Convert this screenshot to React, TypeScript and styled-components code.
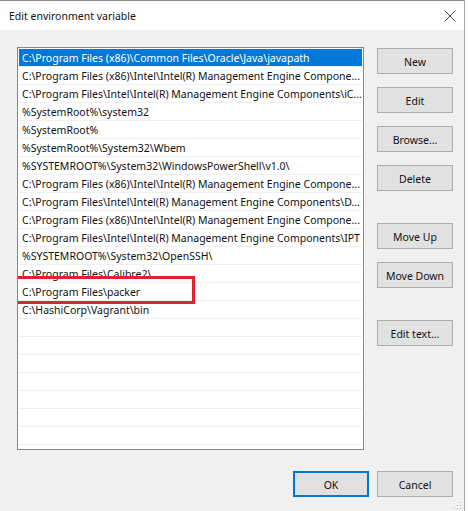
import React from 'react';
import styled, { createGlobalStyle } from 'styled-components';

const GlobalStyle = createGlobalStyle`
  html, body {
    margin: 0;
    padding: 0;
    background: #ffffff;
  }
  body {
    font-family: 'Noto Sans', 'Open Sans', sans-serif;
    font-size: 10.5px;
    color: #111;
  }
`;

const Window = styled.div`
  width: 465px;
  height: 511px;
  box-sizing: border-box;
  border-top: 1px solid #8c8c8c;
  border-right: 1px solid #a8a8a8;
  background: #f0f0f0;
  display: flex;
  flex-direction: column;
  position: relative;
`;

const TitleBar = styled.div`
  height: 30px;
  background: #ffffff;
  display: flex;
  align-items: center;
  justify-content: space-between;
  padding: 1px 8px 0 9px;
`;

const Title = styled.span`
  font-size: 10.5px;
  color: #111;
`;

const CloseButton = styled.div`
  width: 13px;
  height: 14px;
  display: flex;
  align-items: center;
  justify-content: flex-end;
`;

const Body = styled.div`
  flex: 1;
  display: flex;
  flex-direction: column;
  padding: 17px 11px 14px 17px;
`;

const Main = styled.div`
  display: flex;
  gap: 13px;
`;

const List = styled.div`
  width: 347px;
  height: 403px;
  box-sizing: border-box;
  border: 1px solid #828790;
  background: #ffffff;
  padding: 1px;
  overflow: hidden;
`;

const Row = styled.div<{ $selected?: boolean }>`
  position: relative;
  height: 18px;
  box-sizing: border-box;
  border-bottom: 1px solid #f0f0f0;
  padding: 1px 3px 0;
  display: flex;
  align-items: center;
  white-space: nowrap;
  background: ${(p) => (p.$selected ? '#0078d7' : 'transparent')};
  color: ${(p) => (p.$selected ? '#ffffff' : '#111111')};
  font-size: 10.5px;
`;

const Marker = styled.div`
  position: absolute;
  left: -15px;
  top: -7px;
  width: 191px;
  height: 28px;
  box-sizing: border-box;
  border: 3px solid #e0222c;
  pointer-events: none;
`;

const ButtonColumn = styled.div`
  display: flex;
  flex-direction: column;
  gap: 13px;
  padding-top: 1px;
`;

const Button = styled.button<{ $spaced?: boolean; $default?: boolean }>`
  width: 76px;
  height: 26px;
  box-sizing: border-box;
  background: #e1e1e1;
  border: 1px solid ${(p) => (p.$default ? '#0078d7' : '#adadad')};
  box-shadow: ${(p) => (p.$default ? 'inset 0 0 0 1px #0078d7' : 'none')};
  font-family: 'Noto Sans', 'Open Sans', sans-serif;
  font-size: 10.5px;
  color: #111;
  padding: 1px 0 0;
  margin-top: ${(p) => (p.$spaced ? '19px' : '0')};
`;

const Footer = styled.div`
  display: flex;
  justify-content: flex-end;
  gap: 8px;
  margin-top: 21px;
`;

const Grip = styled.div`
  position: absolute;
  right: 2px;
  bottom: 2px;
  width: 10px;
  height: 10px;
`;

const paths = [
  'C:\\Program Files (x86)\\Common Files\\Oracle\\Java\\javapath',
  'C:\\Program Files (x86)\\Intel\\Intel(R) Management Engine Compone...',
  'C:\\Program Files\\Intel\\Intel(R) Management Engine Components\\iC...',
  '%SystemRoot%\\system32',
  '%SystemRoot%',
  '%SystemRoot%\\System32\\Wbem',
  '%SYSTEMROOT%\\System32\\WindowsPowerShell\\v1.0\\',
  'C:\\Program Files (x86)\\Intel\\Intel(R) Management Engine Compone...',
  'C:\\Program Files\\Intel\\Intel(R) Management Engine Components\\D...',
  'C:\\Program Files (x86)\\Intel\\Intel(R) Management Engine Compone...',
  'C:\\Program Files\\Intel\\Intel(R) Management Engine Components\\IPT',
  '%SYSTEMROOT%\\System32\\OpenSSH\\',
  'C:\\Program Files\\Calibre2\\',
  'C:\\Program Files\\packer',
  'C:\\HashiCorp\\Vagrant\\bin',
  '', '', '', '', '', '', '', '',
];

export default function App() {
  return (
    <>
      <GlobalStyle />
      <Window>
        <TitleBar>
          <Title>Edit environment variable</Title>
          <CloseButton>
            <svg width="12" height="12" viewBox="0 0 12 12">
              <path d="M0.5 0.5 L11.5 11.5 M11.5 0.5 L0.5 11.5" stroke="#444" strokeWidth="1" />
            </svg>
          </CloseButton>
        </TitleBar>
        <Body>
          <Main>
            <List>
              {paths.map((p, i) => (
                <Row key={i} $selected={i === 0}>
                  {p}
                  {p === 'C:\\Program Files\\packer' && <Marker />}
                </Row>
              ))}
            </List>
            <ButtonColumn>
              <Button>New</Button>
              <Button>Edit</Button>
              <Button>Browse...</Button>
              <Button>Delete</Button>
              <Button $spaced>Move Up</Button>
              <Button>Move Down</Button>
              <Button $spaced>Edit text...</Button>
            </ButtonColumn>
          </Main>
          <Footer>
            <Button $default>OK</Button>
            <Button>Cancel</Button>
          </Footer>
        </Body>
        <Grip>
          <svg width="10" height="10" viewBox="0 0 10 10">
            {[[8, 2], [8, 5], [5, 5], [8, 8], [5, 8], [2, 8]].map(([x, y], i) => (
              <rect key={i} x={x} y={y} width="1" height="1" fill="#b0b0b0" />
            ))}
          </svg>
        </Grip>
      </Window>
    </>
  );
}
